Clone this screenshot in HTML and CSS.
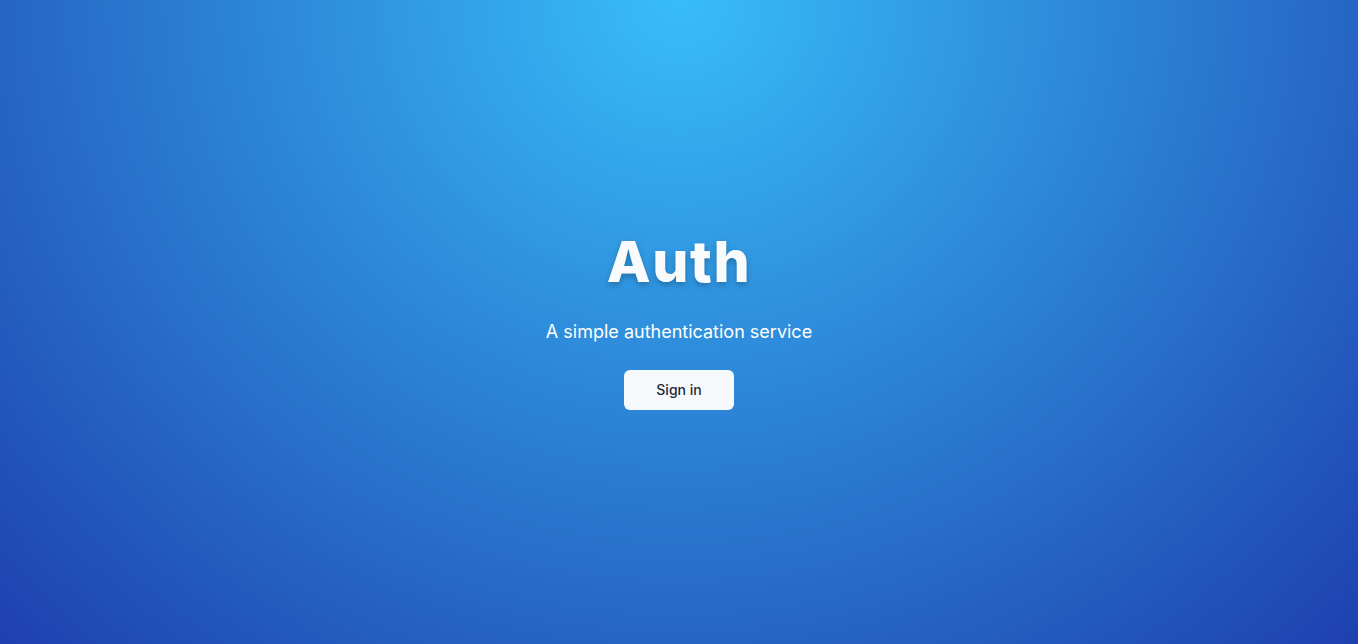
FILE: index.html
```html
<!DOCTYPE html>
<html>
<head>
<meta charset="utf-8">
<link rel="stylesheet" href="styles.css">
</head>
<body>
<main class="hero">
  <h1 class="title">Auth</h1>
  <p class="subtitle">A simple authentication service</p>
  <button class="btn">Sign in</button>
</main>
</body>
</html>
```
FILE: styles.css
```css
html, body {
  margin: 0;
  height: 100%;
}
body {
  font-family: Inter, "Noto Sans", sans-serif;
  background: radial-gradient(ellipse at top, #38bdf8, #1e40af);
  background-color: #1e40af;
}
.hero {
  height: 100%;
  display: flex;
  flex-direction: column;
  align-items: center;
  justify-content: center;
  padding-bottom: 2px;
  box-sizing: border-box;
}
.title {
  margin: 0;
  font-family: Inter, sans-serif;
  font-weight: 800;
  font-size: 57px;
  line-height: 1;
  letter-spacing: 1.5px;
  color: #f8fafc;
  text-shadow: 0 3px 6px rgba(0, 0, 0, 0.25);
}
.subtitle {
  margin: 28px 0 0;
  font-size: 18px;
  color: #ffffff;
  line-height: 28px;
}
.btn {
  margin-top: 24px;
  width: 110px;
  height: 40px;
  border: none;
  border-radius: 6px;
  background: #f6f9fc;
  color: #1e293b;
  font-family: Inter, sans-serif;
  font-size: 14px;
  font-weight: 500;
  cursor: pointer;
}
```
